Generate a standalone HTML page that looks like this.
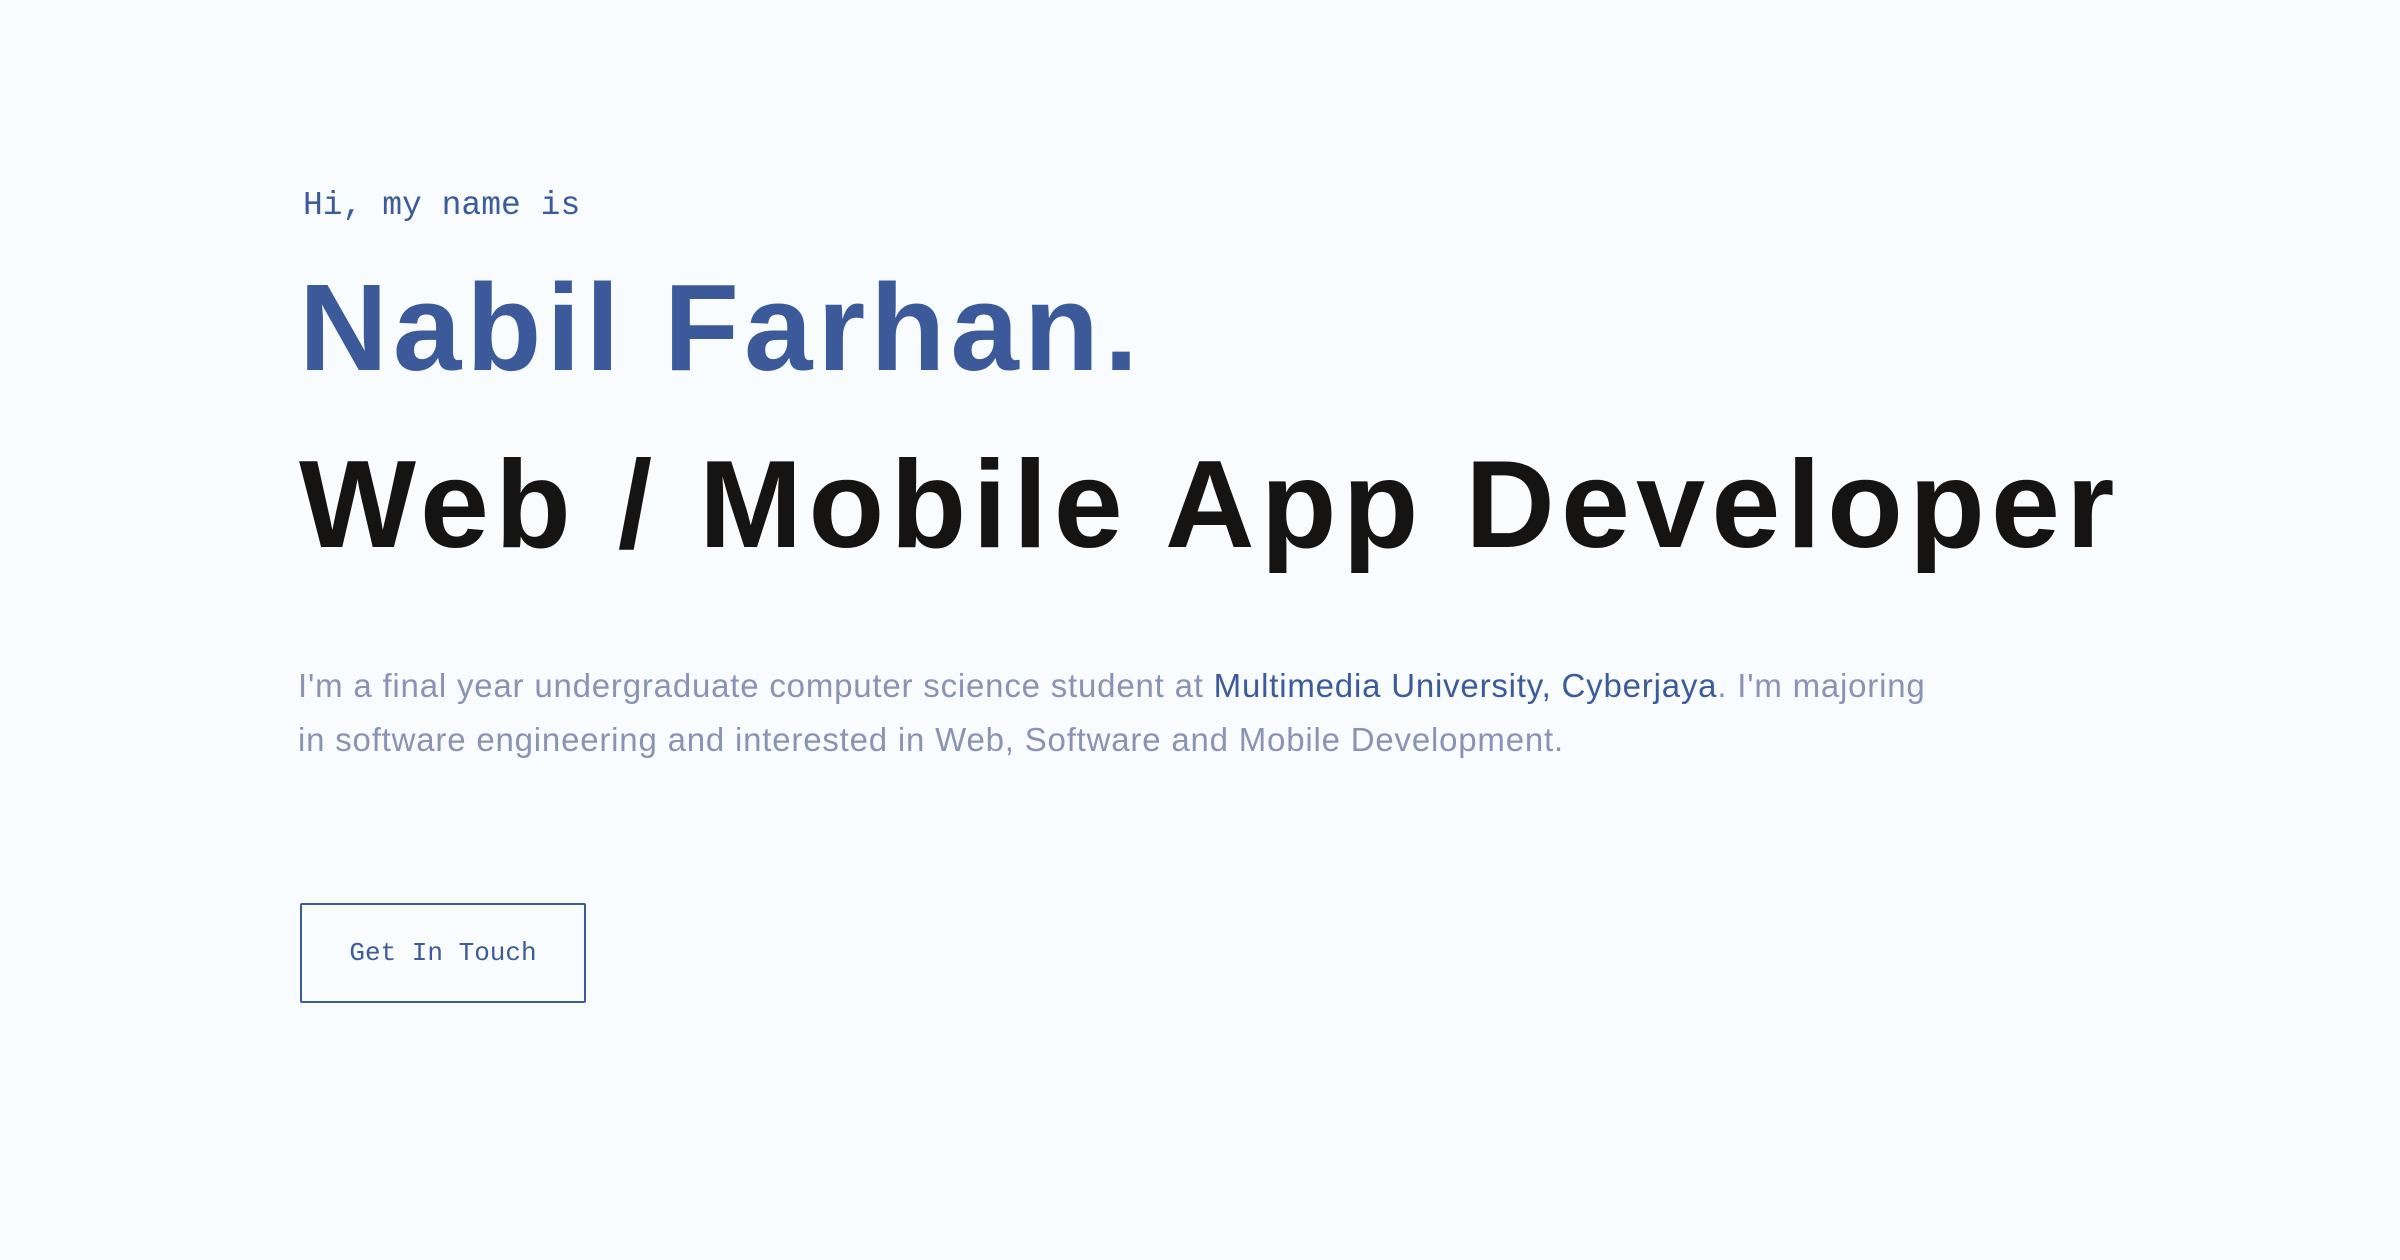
<!DOCTYPE html>
<html><head><meta charset="utf-8"><style>
html,body{margin:0;padding:0;background:#f8fcfe;width:2400px;height:1260px;overflow:hidden}
.a{position:absolute;white-space:nowrap}
.hi{left:303px;top:186px;font:33px/40px "Liberation Mono",monospace;color:#3d5a9a}
.n{left:299px;top:241px;font:bold 123px/176px "Liberation Sans",sans-serif;color:#3c5a9a;letter-spacing:5px}
.r{left:299px;top:417px;font:bold 124px/176px "Liberation Sans",sans-serif;color:#161412;letter-spacing:6.2px}
.p{left:298px;top:659px;font:33px/54px "Liberation Sans",sans-serif;color:#8a93b3;letter-spacing:0.8px}
.p span{color:#3d5a9a}
.b{left:300px;top:903px;width:282px;height:96px;border:2px solid #3d5a9a;border-radius:2px;font:26px/96px "Liberation Mono",monospace;color:#3d5a9a;text-align:center}
</style></head><body>
<div class="a hi">Hi, my name is</div>
<div class="a n">Nabil Farhan.</div>
<div class="a r">Web / Mobile App Developer</div>
<div class="a p">I'm a final year undergraduate computer science student at <span>Multimedia University, Cyberjaya</span>. I'm majoring<br>in software engineering and interested in Web, Software and Mobile Development.</div>
<div class="a b">Get In Touch</div>
</body></html>
